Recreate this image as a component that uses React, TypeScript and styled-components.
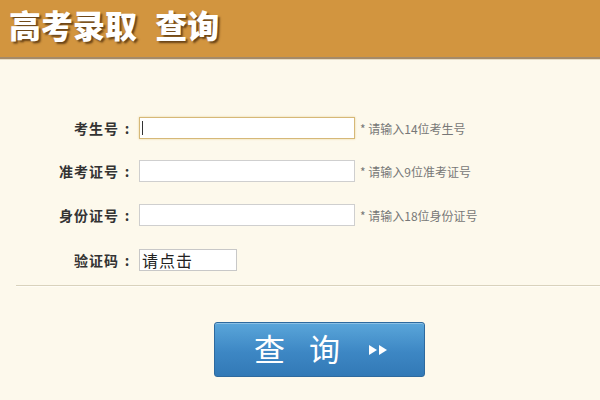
import { createGlobalStyle } from 'styled-components'
import styled from 'styled-components'

const GlobalStyle = createGlobalStyle`
  html, body {
    margin: 0;
    padding: 0;
    background: #fdf9ec;
    font-family: "Liberation Sans", "Noto Sans CJK SC", sans-serif;
  }
`

const Page = styled.div`
  width: 600px;
  height: 400px;
  overflow: hidden;
  background: #fdf9ec;
`

const Header = styled.div`
  height: 59px;
  background: #d2953f;
  border-bottom: 2px solid #a58a68;
  box-shadow: 0 1px 0 #e8dcc4;
  display: flex;
  align-items: flex-start;
  padding: 4px 0 0 9px;
  box-sizing: border-box;
`

const Title = styled.h1`
  margin: 0;
  font-family: "Noto Sans CJK SC", sans-serif;
  font-weight: 900;
  font-size: 32px;
  line-height: 40px;
  color: #fff;
  word-spacing: 11px;
  text-shadow: 2px 2px 2px rgba(70, 40, 10, 0.75);
  white-space: pre;
`

const Form = styled.div`
  display: flex;
  flex-direction: column;
  padding: 58px 0 0 0;
`

const Row = styled.div<{ $gap: number }>`
  display: flex;
  align-items: center;
  height: 22px;
  margin-bottom: ${(p) => p.$gap}px;
`

const Label = styled.label`
  width: 139px;
  display: flex;
  justify-content: flex-end;
  align-items: center;
  font-family: "Noto Sans CJK SC", sans-serif;
  font-weight: 700;
  font-size: 14px;
  letter-spacing: 1px;
  color: #333;
  padding-right: 4px;
  box-sizing: border-box;
`

const Colon = styled.span`
  width: 16px;
  text-align: center;
  letter-spacing: 0;
`

const Field = styled.div<{ $focus?: boolean; $w?: number }>`
  width: ${(p) => p.$w ?? 216}px;
  height: 22px;
  box-sizing: border-box;
  background: #fff;
  border: 1px solid ${(p) => (p.$focus ? '#d6b878' : '#cfcfcf')};
  box-shadow: ${(p) => (p.$focus ? '0 0 2px #e8d39a' : 'none')};
  position: relative;
`

const Caret = styled.span`
  position: absolute;
  left: 2px;
  top: 3px;
  width: 1px;
  height: 14px;
  background: #333;
`

const Hint = styled.span`
  margin-left: 5px;
  font-family: "Noto Sans CJK SC", sans-serif;
  font-size: 12px;
  color: #777;
`

const Captcha = styled(Field)`
  font-family: "Noto Sans CJK SC", sans-serif;
  font-size: 16px;
  line-height: 20px;
  color: #222;
  padding-left: 2px;
  letter-spacing: 1px;
  border-color: #c8c8c8;
`

const Divider = styled.div`
  margin: 14px 0 0 16px;
  height: 1px;
  background: #d9d2bc;
  border-bottom: 1px solid #fffdf6;
`

const ButtonWrap = styled.div`
  display: flex;
  padding: 35px 0 0 214px;
`

const QueryButton = styled.button`
  width: 211px;
  height: 55px;
  border: 1px solid #2e6a9e;
  border-radius: 3px;
  background: linear-gradient(#5aa6da, #3d87c4 55%, #3279b6);
  color: #fff;
  display: flex;
  align-items: center;
  justify-content: flex-start;
  padding: 0 0 4px 39px;
  box-sizing: border-box;
  font-family: "Noto Sans CJK SC", sans-serif;
  font-size: 31px;
  letter-spacing: 24px;
  box-shadow: inset 0 1px 0 rgba(255, 255, 255, 0.3);
  cursor: pointer;

  & svg {
    margin: 4px 0 0 4px;
  }
`

const Arrows = () => (
  <svg width="22" height="12" viewBox="0 0 22 12">
    <path d="M1 1 L9 6 L1 11 Z" fill="#fff" />
    <path d="M11 1 L19 6 L11 11 Z" fill="#fff" />
  </svg>
)

const FormLabel = ({ text }: { text: string }) => (
  <Label>
    {text}
    <Colon>:</Colon>
  </Label>
)

export default function App() {
  return (
    <Page>
      <GlobalStyle />
      <Header>
        <Title>{'高考录取 查询'}</Title>
      </Header>
      <Form>
        <Row $gap={21}>
          <FormLabel text='考生号' />
          <Field $focus>
            <Caret />
          </Field>
          <Hint>* 请输入14位考生号</Hint>
        </Row>
        <Row $gap={22}>
          <FormLabel text='准考证号' />
          <Field />
          <Hint>* 请输入9位准考证号</Hint>
        </Row>
        <Row $gap={23}>
          <FormLabel text='身份证号' />
          <Field />
          <Hint>* 请输入18位身份证号</Hint>
        </Row>
        <Row $gap={0}>
          <FormLabel text='验证码' />
          <Captcha $w={98}>请点击</Captcha>
        </Row>
      </Form>
      <Divider />
      <ButtonWrap>
        <QueryButton>
          查询
          <Arrows />
        </QueryButton>
      </ButtonWrap>
    </Page>
  )
}
